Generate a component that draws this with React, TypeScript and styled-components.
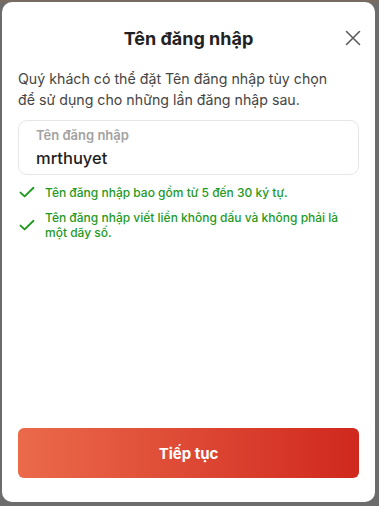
import React from 'react';
import styled, { createGlobalStyle } from 'styled-components';

const GlobalStyle = createGlobalStyle`
  html, body {
    margin: 0;
    padding: 0;
    background: #6c6c6c;
    font-family: Inter, "Noto Sans", "Liberation Sans", sans-serif;
  }
  * {
    box-sizing: border-box;
  }
`;

const rules = [
  'Tên đăng nhập bao gồm từ 5 đến 30 ký tự.',
  'Tên đăng nhập viết liền không dấu và không phải là một dãy số.'
];

function CheckIcon() {
  return (
    <svg width="16" height="16" viewBox="0 0 16 16" fill="none">
      <path
        d="M1.5 8.6 L5.6 12.4 L14.5 3.8"
        stroke="#1f9a1f"
        strokeWidth="1.9"
        strokeLinecap="round"
        strokeLinejoin="round"
      />
    </svg>
  );
}

function CloseIcon() {
  return (
    <svg width="16" height="16" viewBox="0 0 16 16" fill="none">
      <path
        d="M1.5 1.5 L14.5 14.5 M14.5 1.5 L1.5 14.5"
        stroke="#5c5c5c"
        strokeWidth="1.6"
        strokeLinecap="round"
      />
    </svg>
  );
}

export default function App() {
  return (
    <>
      <GlobalStyle />
      <Page>
        <Modal>
          <Header>
            <Title>Tên đăng nhập</Title>
            <CloseButton aria-label="Đóng">
              <CloseIcon />
            </CloseButton>
          </Header>
          <Description>
            Quý khách có thể đặt Tên đăng nhập tùy chọn để sử dụng cho những
            lần đăng nhập sau.
          </Description>
          <Field>
            <FieldLabel>Tên đăng nhập</FieldLabel>
            <FieldInput defaultValue="mrthuyet" />
          </Field>
          <RuleList>
            {rules.map((r) => (
              <Rule key={r}>
                <CheckIcon />
                <span>{r}</span>
              </Rule>
            ))}
          </RuleList>
          <Footer>
            <SubmitButton>Tiếp tục</SubmitButton>
          </Footer>
        </Modal>
      </Page>
    </>
  );
}

const Page = styled.div`
  width: 379px;
  height: 506px;
  padding: 2px 4px 4px 2px;
  background: linear-gradient(180deg, #7a6a5c 0px, #6c6c6c 4px);
`;

const Modal = styled.div`
  display: flex;
  flex-direction: column;
  width: 373px;
  height: 500px;
  padding: 0 16px 24px;
  background: #fff;
  border-radius: 10px;
`;

const Header = styled.div`
  position: relative;
  display: flex;
  align-items: center;
  justify-content: center;
  height: 66px;
  padding-top: 6px;
`;

const Title = styled.h2`
  margin: 0;
  font-size: 18px;
  font-weight: 700;
  color: #222;
`;

const CloseButton = styled.button`
  position: absolute;
  right: -2px;
  top: 28px;
  display: flex;
  padding: 0;
  border: none;
  background: none;
  cursor: pointer;
`;

const Description = styled.p`
  max-width: 330px;
  margin: 0;
  font-size: 14.2px;
  line-height: 21px;
  color: #454545;
`;

const Field = styled.label`
  display: flex;
  flex-direction: column;
  margin-top: 10px;
  height: 55px;
  padding: 6px 17px 0;
  border: 1px solid #e6e6e6;
  border-radius: 9px;
`;

const FieldLabel = styled.span`
  font-size: 13px;
  font-weight: 600;
  line-height: 16px;
  color: #a2a2a2;
`;

const FieldInput = styled.input`
  margin-top: 5px;
  padding: 0;
  border: none;
  outline: none;
  font-family: inherit;
  font-size: 16.5px;
  font-weight: 500;
  color: #1e1e1e;
  background: transparent;
`;

const RuleList = styled.ul`
  display: flex;
  flex-direction: column;
  gap: 10px;
  margin: 9px 0 0;
  padding: 0;
  list-style: none;
`;

const Rule = styled.li`
  display: flex;
  align-items: center;
  gap: 10px;
  padding-left: 1px;
  font-size: 12px;
  font-weight: 500;
  line-height: 15px;
  color: #1f9a1f;

  svg {
    flex-shrink: 0;
  }

  span {
    max-width: 300px;
  }
`;

const Footer = styled.div`
  margin-top: auto;
`;

const SubmitButton = styled.button`
  width: 100%;
  height: 50px;
  border: none;
  border-radius: 6px;
  background: linear-gradient(90deg, #eb6a4b 0%, #d0281e 100%);
  font-family: inherit;
  font-size: 15px;
  font-weight: 700;
  color: #fff;
  cursor: pointer;
`;
